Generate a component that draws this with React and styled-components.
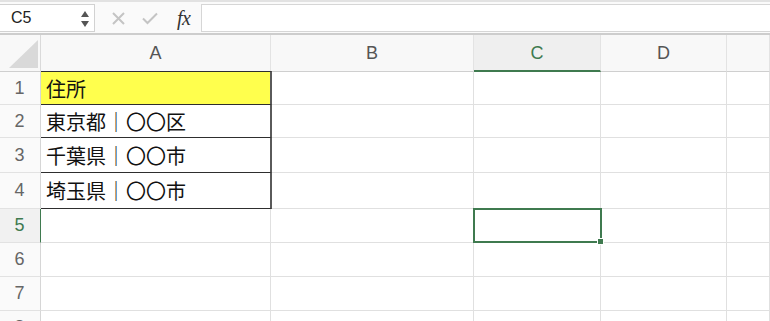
import React from "react";
import styled, { createGlobalStyle } from "styled-components";

const GREEN = "#3f7a4f";

const GlobalStyle = createGlobalStyle`
  html, body {
    margin: 0;
    padding: 0;
    background: #fff;
  }
  body {
    font-family: "Liberation Sans", Arial, "Noto Sans CJK JP", sans-serif;
  }
`;

const Window = styled.div`
  width: 770px;
  height: 321px;
  overflow: hidden;
  background: #fff;
`;

const FormulaBar = styled.div`
  box-sizing: border-box;
  height: 35px;
  display: flex;
  align-items: stretch;
  padding: 2px 0 1px 0;
  border-top: 2px solid #e2e2e2;
  border-bottom: 2px solid #cdcdcd;
  background: #fafafa;
`;

const NameBox = styled.div`
  box-sizing: border-box;
  width: 95px;
  height: 28px;
  border: 1px solid #d2d2d2;
  border-left: none;
  background: #fff;
  display: flex;
  align-items: center;
  justify-content: space-between;
  padding: 0 5px 0 11px;
  font-size: 16px;
  color: #222;
`;

const Stepper = styled.div`
  display: flex;
  flex-direction: column;
  gap: 4px;
  margin-top: 1px;
`;

const Arrow = styled.span`
  width: 0;
  height: 0;
  border-left: 4px solid transparent;
  border-right: 4px solid transparent;
  ${(p) =>
    p.$down
      ? `border-top: 6px solid #555;`
      : `border-bottom: 6px solid #555;`}
`;

const IconButton = styled.div`
  display: flex;
  align-items: center;
  justify-content: center;
  margin-left: ${(p) => p.$ml}px;
  width: ${(p) => p.$w}px;
  color: #c4c4c4;
`;

const Fx = styled.div`
  margin-left: 19px;
  width: 17px;
  display: flex;
  align-items: center;
  font-family: "Liberation Serif", "Times New Roman", serif;
  font-style: italic;
  font-size: 20px;
  color: #333;
  letter-spacing: -0.5px;
`;

const FormulaInput = styled.div`
  box-sizing: border-box;
  margin-left: 7px;
  flex: 1;
  height: 28px;
  border: 1px solid #d6d6d6;
  border-right: none;
  background: #fff;
`;

const Sheet = styled.div`
  display: grid;
  grid-template-columns: 41px 230px 203px 127px 126px 1fr;
  grid-template-rows: 37px 33px 33px 35px 36px 34px 34px 34px 34px;
`;

const Corner = styled.div`
  box-sizing: border-box;
  position: relative;
  background: #f8f8f8;
  border-right: 1px solid #dadada;
  border-bottom: 1px solid #cfcfcf;
  &::after {
    content: "";
    position: absolute;
    left: 9px;
    top: 5px;
    width: 29px;
    height: 28px;
    background: #d9d9d9;
    clip-path: polygon(100% 0, 100% 100%, 0 100%);
  }
`;

const ColHeader = styled.div`
  box-sizing: border-box;
  display: flex;
  align-items: center;
  justify-content: center;
  font-size: 18px;
  color: ${(p) => (p.$active ? GREEN : "#555")};
  background: ${(p) => (p.$active ? "#efefef" : "#f8f8f8")};
  border-right: 1px solid #e3e3e3;
  border-bottom: ${(p) => (p.$active ? `2px solid ${GREEN}` : "1px solid #cfcfcf")};
  padding-top: 1px;
`;

const RowHeader = styled.div`
  box-sizing: border-box;
  display: flex;
  align-items: center;
  justify-content: center;
  font-size: 18px;
  color: ${(p) => (p.$active ? GREEN : "#666")};
  background: ${(p) => (p.$active ? "#f1f1f1" : "#fafafa")};
  border-right: 1px solid ${(p) => (p.$active ? GREEN : "#d6d6d6")};
  border-bottom: 1px solid #e2e2e2;
  padding-right: 1px;
`;

const Cell = styled.div`
  box-sizing: border-box;
  position: relative;
  display: flex;
  align-items: center;
  padding-left: 5px;
  font-family: "Noto Sans CJK JP", "Noto Sans", sans-serif;
  font-size: 20px;
  color: #111;
  background: ${(p) => (p.$fill ? p.$fill : "#fff")};
  border-right: ${(p) => (p.$boxed ? "2px solid #5a5a5a" : "1px solid #e0e0e0")};
  border-bottom: ${(p) => (p.$boxed ? "1px solid #2e2e2e" : "1px solid #e0e0e0")};
  ${(p) => (p.$boxed ? "margin-right: -1px; z-index: 1;" : "")}
  ${(p) => (p.$topBoxed ? "border-top: 1px solid #2e2e2e; margin-top: -1px;" : "")}
`;

const Selection = styled.div`
  position: absolute;
  left: -1px;
  top: -1px;
  right: -2px;
  bottom: -1px;
  border: 2px solid ${GREEN};
  pointer-events: none;
  z-index: 2;
  &::after {
    content: "";
    position: absolute;
    right: -4px;
    bottom: -4px;
    width: 5px;
    height: 5px;
    background: ${GREEN};
    border: 1px solid #fff;
  }
`;

const columns = ["A", "B", "C", "D", ""];
const cellData = {
  1: "住所",
  2: "東京都｜〇〇区",
  3: "千葉県｜〇〇市",
  4: "埼玉県｜〇〇市",
};

const CrossIcon = () => (
  <svg width="13" height="13" viewBox="0 0 13 13">
    <path d="M1 1 L12 12 M12 1 L1 12" stroke="currentColor" strokeWidth="2" fill="none" />
  </svg>
);

const CheckIcon = () => (
  <svg width="16" height="13" viewBox="0 0 16 13">
    <path d="M1 6.5 L5.5 11 L15 1.5" stroke="currentColor" strokeWidth="2" fill="none" />
  </svg>
);

export default function App() {
  const rows = [1, 2, 3, 4, 5, 6, 7, 8];
  return (
    <Window>
      <GlobalStyle />
      <FormulaBar>
        <NameBox>
          C5
          <Stepper>
            <Arrow />
            <Arrow $down />
          </Stepper>
        </NameBox>
        <IconButton $ml={17} $w={13}>
          <CrossIcon />
        </IconButton>
        <IconButton $ml={17} $w={16}>
          <CheckIcon />
        </IconButton>
        <Fx>fx</Fx>
        <FormulaInput />
      </FormulaBar>
      <Sheet>
        <Corner />
        {columns.map((c, i) => (
          <ColHeader key={i} $active={c === "C"}>
            {c}
          </ColHeader>
        ))}
        {rows.map((r) => (
          <React.Fragment key={r}>
            <RowHeader $active={r === 5}>{r}</RowHeader>
            {columns.map((c, i) => {
              const inTable = c === "A" && r <= 4;
              return (
                <Cell
                  key={i}
                  $boxed={inTable}
                  $topBoxed={inTable && r === 1}
                  $fill={inTable && r === 1 ? "#ffff4d" : null}
                >
                  {inTable ? cellData[r] : null}
                  {c === "C" && r === 5 ? <Selection /> : null}
                </Cell>
              );
            })}
          </React.Fragment>
        ))}
      </Sheet>
    </Window>
  );
}
